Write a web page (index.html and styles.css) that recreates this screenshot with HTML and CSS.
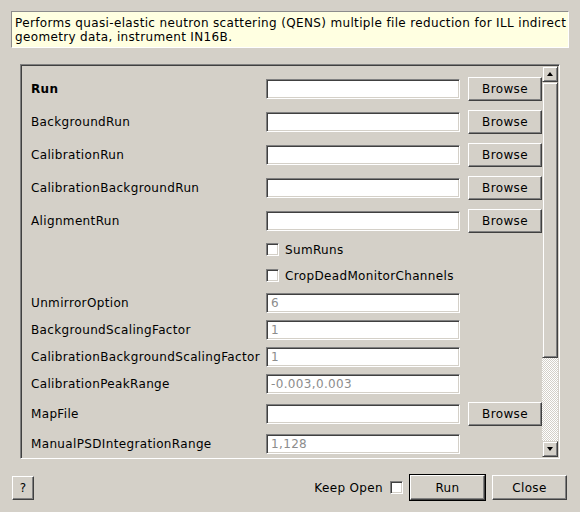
FILE: index.html
```html
<!DOCTYPE html>
<html>
<head>
<meta charset="utf-8">
<link rel="stylesheet" href="styles.css">
</head>
<body>
<div class="dialog">
  <div class="desc">Performs quasi-elastic neutron scattering (QENS) multiple file reduction for ILL indirect<br>geometry data, instrument IN16B.</div>
  <div class="frame">
    <div class="props">
      <span class="lbl bold">Run</span><span class="field"><span class="input"></span></span><span class="btn browse">Browse</span>
      <span class="lbl">BackgroundRun</span><span class="field"><span class="input"></span></span><span class="btn browse">Browse</span>
      <span class="lbl">CalibrationRun</span><span class="field"><span class="input"></span></span><span class="btn browse">Browse</span>
      <span class="lbl">CalibrationBackgroundRun</span><span class="field"><span class="input"></span></span><span class="btn browse">Browse</span>
      <span class="lbl">AlignmentRun</span><span class="field"><span class="input"></span></span><span class="btn browse">Browse</span>
      <span class="lbl"></span><label class="check"><span class="box"></span>SumRuns</label>
      <span class="lbl"></span><label class="check"><span class="box"></span>CropDeadMonitorChannels</label>
      <span class="lbl">UnmirrorOption</span><span class="field"><span class="input ph">6</span></span><span></span>
      <span class="lbl">BackgroundScalingFactor</span><span class="field"><span class="input ph">1</span></span><span></span>
      <span class="lbl">CalibrationBackgroundScalingFactor</span><span class="field"><span class="input ph">1</span></span><span></span>
      <span class="lbl">CalibrationPeakRange</span><span class="field"><span class="input ph">-0.003,0.003</span></span><span></span>
      <span class="lbl">MapFile</span><span class="field"><span class="input"></span></span><span class="btn browse">Browse</span>
      <span class="lbl">ManualPSDIntegrationRange</span><span class="field"><span class="input ph">1,128</span></span><span></span>
    </div>
    <div class="vscroll">
      <div class="sbtn"><span class="arrow up"></span></div>
      <div class="slider"></div>
      <div class="trough"></div>
      <div class="sbtn"><span class="arrow down"></span></div>
    </div>
  </div>
  <div class="footer">
    <span class="btn help">?</span>
    <span class="spacer"></span>
    <span class="keep">Keep Open</span>
    <span class="box keepbox"></span>
    <span class="default"><span class="btn run">Run</span></span>
    <span class="btn close">Close</span>
  </div>
</div>
</body>
</html>
```
FILE: styles.css
```css
html, body {
  margin: 0;
  padding: 0;
}
body {
  width: 580px;
  height: 512px;
  background: #d4d0c8;
  font-family: "DejaVu Sans", sans-serif;
  font-size: 12px;
  letter-spacing: 0.35px;
  color: #000;
  overflow: hidden;
}
.dialog {
  padding: 11px 11px 0 11px;
  display: flex;
  flex-direction: column;
}
.desc {
  height: 28px;
  line-height: 14px;
  padding: 4px 3px 3px 3px;
  background: #ffffe1;
  border: 1px solid;
  border-color: #8c8c8c #ffffff #ffffff #8c8c8c;
  white-space: nowrap;
  overflow: hidden;
}
.frame {
  margin: 16px 9px 0 9px;
  height: 391px;
  border: 1px solid;
  border-color: #808080 #ffffff #ffffff #808080;
  box-shadow: inset 1px 1px #404040, inset -1px -1px #d4d0c8;
  padding: 1px;
  display: flex;
  overflow: hidden;
}
.props {
  flex: 1;
  overflow: hidden;
  padding: 6px 0 0 9px;
  display: grid;
  grid-template-columns: 235px 202px 74px;
  grid-template-rows: 33px 33px 33px 33px 33px 25px 27px 27px 27px 27px 27px 33px 27px;
  align-items: center;
}
.lbl {
  white-space: nowrap;
}
.bold {
  font-weight: bold;
}
.field {
  display: flex;
}
.input {
  box-sizing: border-box;
  width: 194px;
  height: 20px;
  background: #fff;
  border: 1px solid;
  border-color: #808080 #ffffff #ffffff #808080;
  box-shadow: inset 1px 1px #404040, inset -1px -1px #d4d0c8;
  padding: 0 3px 0 4px;
  line-height: 18px;
}
.ph {
  color: #8c8c8c;
}
.btn {
  box-sizing: border-box;
  display: flex;
  align-items: center;
  justify-content: center;
  background: #d4d0c8;
  border: 1px solid;
  border-color: #ffffff #404040 #404040 #ffffff;
  box-shadow: inset -1px -1px #808080;
}
.browse {
  width: 74px;
  height: 24px;
}
.check {
  grid-column: 2 / 4;
  display: flex;
  align-items: center;
  gap: 6px;
}
.box {
  box-sizing: border-box;
  display: inline-block;
  width: 13px;
  height: 13px;
  background: #fff;
  border: 1px solid;
  border-color: #808080 #ffffff #ffffff #808080;
  box-shadow: inset 1px 1px #404040, inset -1px -1px #d4d0c8;
}
.vscroll {
  width: 16px;
  display: flex;
  flex-direction: column;
}
.sbtn {
  box-sizing: border-box;
  height: 16px;
  flex: none;
  display: flex;
  align-items: center;
  justify-content: center;
  background: #d4d0c8;
  border: 1px solid;
  border-color: #d4d0c8 #404040 #404040 #d4d0c8;
  box-shadow: inset 1px 1px #ffffff, inset -1px -1px #808080;
}
.arrow {
  width: 0;
  height: 0;
  border-left: 3.5px solid transparent;
  border-right: 3.5px solid transparent;
}
.arrow.up {
  border-bottom: 4px solid #000;
}
.arrow.down {
  border-top: 4px solid #000;
}
.slider {
  box-sizing: border-box;
  height: 276px;
  flex: none;
  background: #d4d0c8;
  border: 1px solid;
  border-color: #d4d0c8 #404040 #404040 #d4d0c8;
  box-shadow: inset 1px 1px #ffffff, inset -1px -1px #808080;
}
.trough {
  flex: 1;
  background: repeating-conic-gradient(#ffffff 0 25%, #d4d0c8 0 50%) 0 0 / 2px 2px;
}
.footer {
  margin-top: 15px;
  height: 27px;
  display: flex;
  align-items: center;
  padding: 0 2px 0 1px;
}
.help {
  width: 22px;
  height: 24px;
}
.spacer {
  flex: 1;
}
.keep {
  margin-right: 7px;
}
.keepbox {
  margin-right: 6px;
}
.default {
  border: 1px solid #000;
  display: flex;
}
.run {
  width: 75px;
  height: 25px;
}
.close {
  width: 75px;
  height: 25px;
  margin-left: 6px;
}
```
